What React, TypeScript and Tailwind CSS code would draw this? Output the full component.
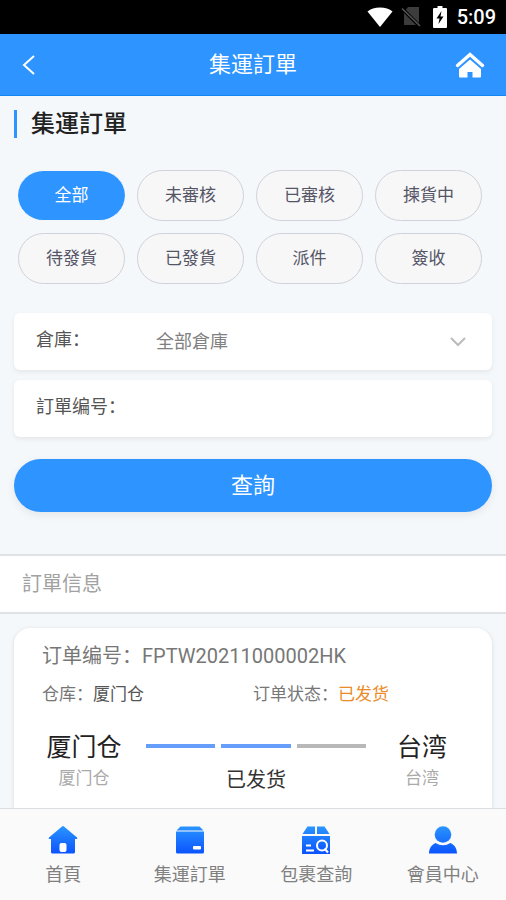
import { useState } from 'react';
import type { ReactNode } from 'react';
import clsx from 'clsx';

const FILTERS = ['全部', '未審核', '已審核', '揀貨中', '待發貨', '已發貨', '派件', '簽收'];

function StatusBar() {
  return (
    <div className="flex h-[34px] shrink-0 items-center justify-end bg-black pr-2.5 text-white">
      <svg className="mr-2 h-5 w-[26px]" viewBox="0 0 26 20" fill="currentColor">
        <path d="M13 20 .5 4.500C3.500 1.800 8 .5 13 .5s9.500 1.300 12.500 4z" />
      </svg>
      <svg className="mr-3 h-5 w-5" viewBox="0 0 20 20" fill="none">
        <path d="M7 0h11v18H3V5z" fill="#3c3c3c" />
        <path d="M0 .5 19 19.500" stroke="#000" strokeWidth="3.600" />
        <path d="M1 1.500 19 19" stroke="#555" strokeWidth="1.600" />
      </svg>
      <svg className="mr-2.5 h-[22px] w-3.5" viewBox="0 0 14 22" fill="none">
        <path d="M4.500 0h5v2H13q1 0 1 1v18q0 1-1 1H1q-1 0-1-1V3q0-1 1-1h3.500z" fill="#fff" />
        <path d="M8.500 5 3.500 12.500H6.500L5.500 18 10.500 10.500H7.500z" fill="#000" />
      </svg>
      <span className="text-xl font-medium">5:09</span>
    </div>
  );
}

function AppHeader() {
  return (
    <header className="flex h-[62px] shrink-0 items-center justify-between border-b border-[#1485f5] bg-[#2e94ff] px-5 text-white">
      <button type="button" aria-label="返回" className="flex w-8 items-center">
        <svg className="h-5 w-4" viewBox="0 0 16 20" fill="none" stroke="currentColor" strokeWidth="2">
          <path d="M14 1 4 10l10 9" />
        </svg>
      </button>
      <h1 className="text-[22px] leading-8">集運訂單</h1>
      <a href="#home" aria-label="首頁" className="flex w-8 justify-end">
        <svg className="h-[26px] w-8" viewBox="0 0 32 26">
          <path d="M3.500 13.500 16 2.500l12.500 11" fill="none" stroke="#fff" strokeWidth="3.400" strokeLinecap="round" />
          <path d="M16 7.500 27 17V24.500q0 1-1 1h-7.500V20h-5v5.500H6q-1 0-1-1V17z" fill="#fff" />
        </svg>
      </a>
    </header>
  );
}

function OrderCard() {
  return (
    <article className="mx-3.5 mt-3.5 mb-4 rounded-2xl bg-white px-7 pt-3 pb-8 shadow-[0_1px_4px_rgba(0,0,0,0.12)]">
      <h3 className="text-xl leading-8 text-[#777]">订单编号：FPTW20211000002HK</h3>
      <div className="mt-2 grid grid-cols-2 text-[17px] leading-7 text-[#777]">
        <p>
          仓库：<span className="text-[#555]">厦门仓</span>
        </p>
        <p>
          订单状态：<span className="text-[#ea8c28]">已发货</span>
        </p>
      </div>
      <div className="mt-6 flex items-start justify-between">
        <div className="flex w-[84px] flex-col items-center whitespace-nowrap">
          <span className="text-[25px] leading-8 text-[#222]">厦门仓</span>
          <span className="text-[17px] leading-7 text-[#aaa]">厦门仓</span>
        </div>
        <div className="mr-3.5 ml-5 flex-1 pt-3">
          <div className="flex gap-1.5">
            <span className="h-1 flex-1 bg-[#659dfb]" />
            <span className="h-1 flex-1 bg-[#659dfb]" />
            <span className="h-1 flex-1 bg-[#b8b8b8]" />
          </div>
          <p className="mt-4 text-center text-xl leading-8 text-[#333]">已发货</p>
        </div>
        <div className="flex w-[84px] flex-col items-center">
          <span className="text-[25px] leading-8 text-[#222]">台湾</span>
          <span className="text-[17px] leading-7 text-[#aaa]">台湾</span>
        </div>
      </div>
    </article>
  );
}

function TabItem({ href, label, children }: { href: string; label: string; children: ReactNode }) {
  return (
    <a href={href} className="flex flex-1 flex-col items-center pt-4 text-[#808080]">
      <svg className="h-[30px] w-[30px]" viewBox="0 0 30 30" fill="url(#tab-blue)">
        {children}
      </svg>
      <span className="mt-1.5 text-lg leading-7">{label}</span>
    </a>
  );
}

function TabBar() {
  return (
    <nav className="flex h-[92px] shrink-0 border-t border-[#dcdfe2] bg-[#fafafa]">
      <svg className="absolute h-0 w-0" aria-hidden="true">
        <defs>
          <linearGradient id="tab-blue" x1="0" y1="0" x2="0" y2="30" gradientUnits="userSpaceOnUse">
            <stop offset="0" stopColor="#2b98ff" />
            <stop offset="1" stopColor="#0a50ff" />
          </linearGradient>
        </defs>
      </svg>
      <TabItem href="#home" label="首頁">
        <path d="M14 1.500q1-.9 2 0L29 12.500q1 1.500-.5 1.500H27v13q0 1.500-1.500 1.500h-21Q3 28.500 3 27V14H1.500Q0 14 1 12.500z" />
        <rect x="11.500" y="18" width="7" height="9" rx="2" fill="#fff" />
      </TabItem>
      <TabItem href="#orders" label="集運訂單">
        <path d="M5.500 1.500h19l4 4h-27z" />
        <path d="M1 6.500h28v20.500q0 1.500-1.500 1.500h-25Q1 28.500 1 27z" />
        <rect x="18" y="21" width="8" height="3.500" rx="1" fill="#fff" />
      </TabItem>
      <TabItem href="#parcels" label="包裹查詢">
        <path d="M6.500 1.500H14V9H1.500z" />
        <path d="M16 1.500h7.500L28.500 9H16z" />
        <path d="M1 11h28v18H1z" />
        <g fill="none" stroke="#fff" strokeWidth="2">
          <path d="M5 20.500h5M5 25.500h8" />
          <circle cx="21" cy="20.500" r="5" />
          <path d="m23.500 23.500 3.500 4" />
        </g>
      </TabItem>
      <TabItem href="#member" label="會員中心">
        <circle cx="15" cy="9.500" r="8.300" />
        <path d="M7.500 18q7.500 4.500 15 0c4 1.800 6.500 5.500 6.500 10.500H1C1 23.500 3.500 19.800 7.500 18z" />
      </TabItem>
    </nav>
  );
}

export default function App() {
  const [filter, setFilter] = useState('全部');

  return (
    <div className="flex h-dvh flex-col bg-[#f4f8fa] font-[Roboto,'Noto_Sans_CJK_SC',sans-serif]">
      <StatusBar />
      <AppHeader />

      <main className="min-h-0 flex-1 overflow-y-auto [scrollbar-width:none]">
        <div className="flex items-center gap-3.5 px-3.5 pt-3">
          <span className="h-7 w-[3px] bg-[#2e94ff]" />
          <h2 className="text-2xl leading-8 font-medium text-[#222]">集運訂單</h2>
        </div>

        <div className="mt-[30px] grid grid-cols-4 gap-3 pr-6 pl-[18px]">
          {FILTERS.map((name) => (
            <button
              key={name}
              type="button"
              onClick={() => setFilter(name)}
              className={clsx(
                'h-[51px] rounded-full text-[17px]',
                filter === name
                  ? 'border-y border-[#f4f8fa] bg-[#2e94ff] text-white'
                  : 'border border-[#cfd2da] bg-[#f7f7f8] text-[#556]'
              )}
            >
              {name}
            </button>
          ))}
        </div>

        <form className="mt-[29px] px-3.5" onSubmit={(e) => e.preventDefault()}>
          <div className="flex h-[57px] items-center rounded-md bg-white px-[22px] shadow-[0_2px_5px_rgba(0,0,0,0.07)]">
            <label htmlFor="warehouse" className="w-[120px] shrink-0 pb-1 text-lg text-[#555]">
              倉庫：
            </label>
            <select
              id="warehouse"
              className="min-w-0 flex-1 appearance-none bg-transparent text-lg text-[#808080] outline-none"
            >
              <option>全部倉庫</option>
            </select>
            <svg
              className="pointer-events-none mr-1 h-4 w-4 text-[#bbb]"
              viewBox="0 0 16 16"
              fill="none"
              stroke="currentColor"
              strokeWidth="2"
            >
              <path d="m1 4 7 7 7-7" />
            </svg>
          </div>
          <div className="mt-2.5 flex h-[57px] items-center rounded-md bg-white px-[22px] shadow-[0_2px_5px_rgba(0,0,0,0.07)]">
            <label htmlFor="order-no" className="w-[120px] shrink-0 pb-1 text-lg text-[#555]">
              訂單编号：
            </label>
            <input id="order-no" type="text" className="min-w-0 flex-1 bg-transparent text-lg outline-none" />
          </div>
          <button
            type="submit"
            className="mt-[22px] h-[53px] w-full rounded-full bg-[#2e94ff] text-[22px] text-white shadow-[0_3px_8px_rgba(0,0,0,0.07)]"
          >
            查詢
          </button>
        </form>

        <h2 className="mt-[42px] flex h-[60px] items-center border-y-2 border-[#dfe3e6] bg-white px-[22px] text-xl text-[#a2a2a2]">
          訂單信息
        </h2>

        <OrderCard />
      </main>

      <TabBar />
    </div>
  );
}
